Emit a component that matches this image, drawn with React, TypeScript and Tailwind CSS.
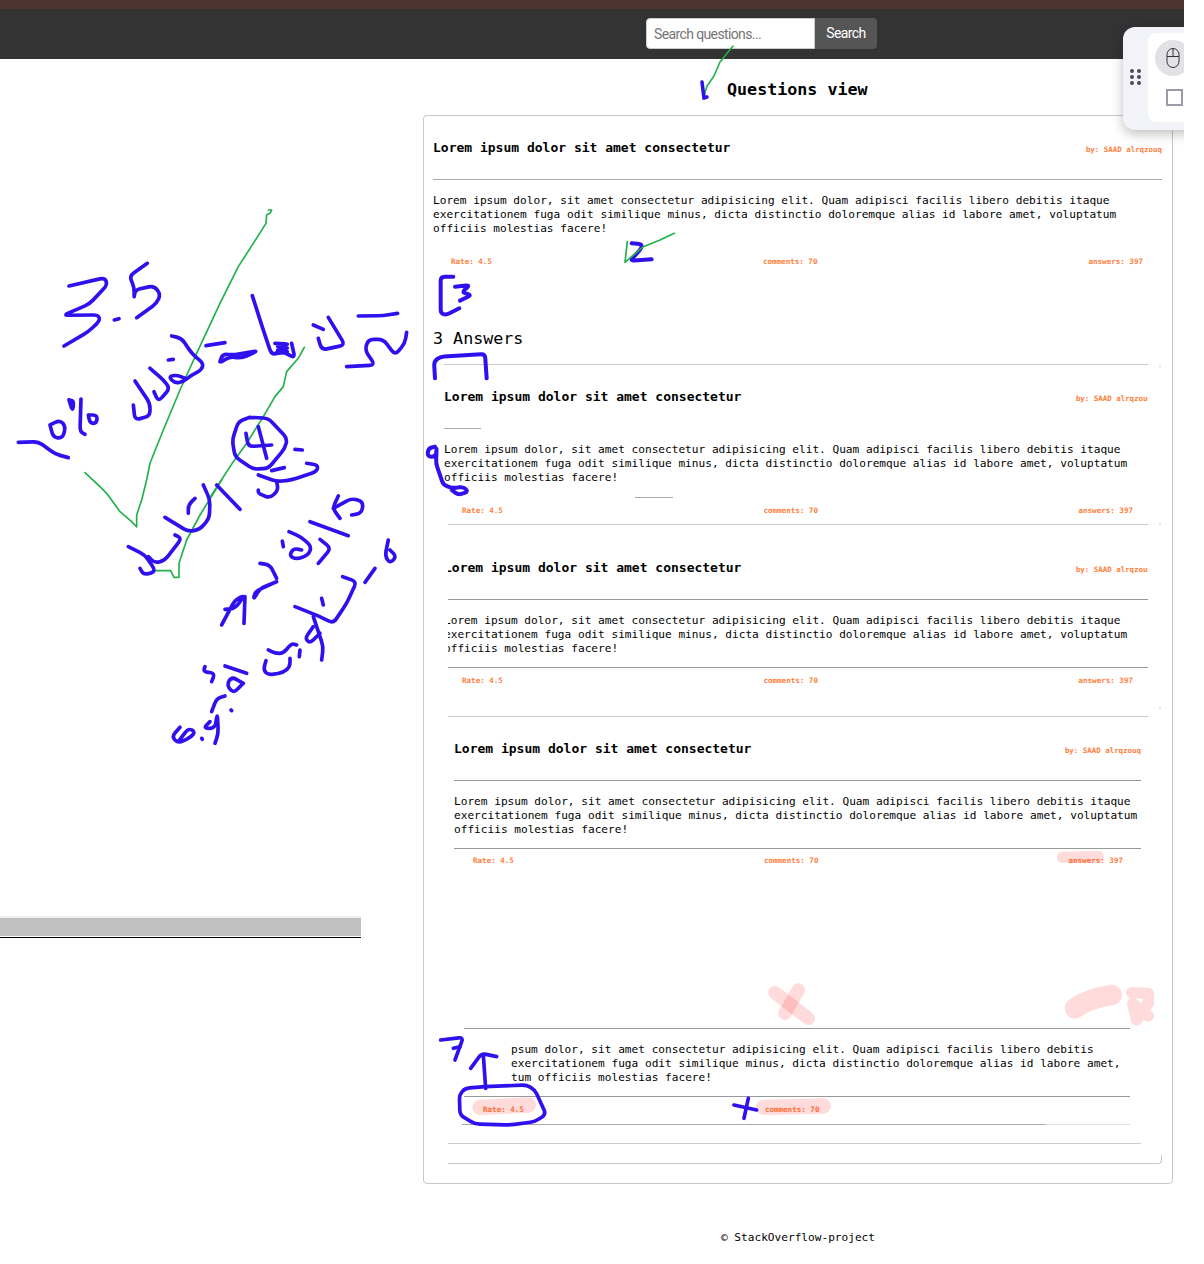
import React from "react";

const BODY = (
  <>
    Lorem ipsum dolor, sit amet consectetur adipisicing elit. Quam adipisci facilis libero debitis itaque
    <br />
    exercitationem fuga odit similique minus, dicta distinctio doloremque alias id labore amet, voluptatum
    <br />
    officiis molestias facere!
  </>
);

function Title() {
  return <h3 className="text-[13px] leading-[18px] font-bold text-black whitespace-nowrap">Lorem ipsum dolor sit amet consectetur</h3>;
}
function Author() {
  return <span className="mt-[4px] text-[7.45px] leading-[10px] font-bold text-[#ff7d3a] whitespace-nowrap">by: SAAD alrqzouq</span>;
}
function Text() {
  return <p className="text-[11.13px] leading-[14px] text-black whitespace-nowrap">{BODY}</p>;
}
function Meta({ children }: { children: React.ReactNode }) {
  return <span className="text-[7.55px] leading-[13px] font-bold text-[#ff7d3a] whitespace-nowrap">{children}</span>;
}
function FootRow() {
  return (
    <>
      <Meta>Rate: 4.5</Meta>
      <Meta>comments: 70</Meta>
      <Meta>answers: 397</Meta>
    </>
  );
}

// Rounds the corners of a hand-drawn polyline so that it reads as a pen stroke.
function smooth(d: string, r = 16): string {
  const subs = d.split("M").filter(Boolean);
  return subs
    .map((s) => {
      const closed = s.trim().endsWith("Z");
      const pts = s
        .replace("Z", "")
        .split("L")
        .map((p) => p.trim().split(/\s+/).map(Number));
      if (closed) pts.push(pts[0]);
      let out = `M${pts[0][0]} ${pts[0][1]}`;
      for (let i = 1; i < pts.length - 1; i++) {
        const [ax, ay] = pts[i - 1];
        const [bx, by] = pts[i];
        const [cx, cy] = pts[i + 1];
        const l1 = Math.hypot(bx - ax, by - ay) || 1;
        const l2 = Math.hypot(cx - bx, cy - by) || 1;
        const t1 = Math.min(r, l1 / 2) / l1;
        const t2 = Math.min(r, l2 / 2) / l2;
        out += `L${bx - (bx - ax) * t1} ${by - (by - ay) * t1}Q${bx} ${by} ${bx + (cx - bx) * t2} ${by + (cy - by) * t2}`;
      }
      const last = pts[pts.length - 1];
      out += `L${last[0]} ${last[1]}`;
      return out;
    })
    .join("");
}

const blue1 = [
  "M207 258L315 233L322 255L268 312L190 346L295 345L300 362L265 395L192 438",
  "M343 360L357 356",
  "M442 190L388 228L403 262L402 297L405 270L462 257L482 283L470 310L410 353",
  "M55 727L115 725L165 762L205 773",
  "M150 675L180 660L197 680L188 715L160 712Z",
  "M207 600L222 603L218 635Z",
  "M243 597L240 695L255 703",
  "M265 645L292 645L290 670L270 670Z",
  "M405 543L450 610L450 648L405 660L400 615",
  "M450 505L490 540L510 565L475 605L462 575",
  "M515 408L545 415L575 460L610 490L605 510L575 525L550 545L525 550L505 530L530 525L555 535",
  "M505 480L520 478",
  "M618 437L675 428",
  "M660 485L668 462L700 465L775 452L725 475L690 470L665 485",
  "M757 287L785 375L815 465L850 455L885 475L875 430",
  "M825 430L870 432L825 440L870 444L825 450L870 455L830 458",
  "M985 352L1035 435L965 450L955 415",
  "M940 375L970 388",
  "M1075 348L1150 347L1193 340",
  "M1040 500L1125 495L1095 450L1105 418L1150 418L1185 465L1215 430L1220 397",
  "M750 652L805 655L862 715L855 745L805 805L760 808L705 770L697 720L715 665Z",
  "M738 700L745 740L815 735",
  "M775 680L800 775",
  "M885 748L907 750",
  "M815 812L853 803",
  "M775 825L830 845L875 840L950 815L955 795L920 790",
  "M830 845L835 870L810 895L775 880L775 870",
];

const blue3 = [
  "M25 200L75 225L105 270L95 280L70 283L60 265",
  "M85 230L105 250L135 240L185 175L165 165",
  "M135 112L205 155L240 148L268 115L270 60L250 15",
  "M290 15L360 88",
  "M205 100L205 75L225 55",
  "M655 48L638 85L660 115",
  "M640 85L695 55L730 65L725 100L695 105",
  "M570 125L685 167",
  "M507 155L545 172L575 200L565 225L530 238L508 228L520 205L545 210",
  "M600 178L633 205L595 250",
  "M487 183L490 200",
  "M420 250L450 255L470 295",
  "M468 306L420 325L400 360L405 335L470 305",
  "M315 388L345 385L375 345L345 360L305 435",
  "M375 350L372 430",
  "M805 180L795 228L810 250L830 230L810 210",
  "M765 265L735 307",
  "M668 290L710 305L680 370L640 430L600 410L525 380",
  "M605 355L610 375",
  "M580 410L610 500L605 540",
  "M580 440L555 475L570 490L600 460",
  "M445 510L465 520L490 520L515 490L530 495",
  "M438 542L430 570L445 585L490 578L510 560L510 535",
  "M540 510L538 530",
  "M255 560L250 575L285 580L275 605",
  "M315 558L380 580",
  "M370 610L340 640L320 615L335 590Z",
  "M315 648L290 655L275 695",
  "M270 725L250 745L285 745L292 700L295 760L285 790",
  "M180 742L155 770L175 790L215 770L225 755L205 745L175 785",
  "M245 775L247 778",
  "M333 690L335 692",
];

const blue4 = [
  "M635 40L665 42L665 55L630 92L695 88",
  "M100 140L62 140L62 250L78 255L118 235",
  "M105 170L150 165L125 187L155 195L120 212",
  "M45 445L42 395L60 380L195 372L200 445",
  "M45 650L25 655L22 680L48 680L50 650L48 700L70 765L100 775L130 770L145 785L115 795L95 780",
];

const blue5 = [
  "M62 180L130 172L105 240",
  "M100 205L120 200",
  "M197 325L190 225",
  "M152 265L185 220L230 230",
  "M195 320L135 325L118 345L120 405L165 432L270 435L345 425L378 403L345 330L320 315Z",
  "M985 355L972 415",
  "M942 375L1010 390",
];

function Annotations() {
  return (
    <svg className="absolute left-0 top-0 pointer-events-none" width={1184} height={1264} fill="none" strokeLinecap="round" strokeLinejoin="round">
      {/* pink highlights */}
      <g stroke="#ff0000" strokeOpacity={0.14}>
        <g transform="translate(420,980) scale(0.3333)">
          <path d="M180 382L325 375" strokeWidth={46} />
          <path d="M1030 382L1210 378" strokeWidth={46} />
          <path d="M1065 38L1165 115" strokeWidth={40} />
          <path d="M1135 30L1095 100" strokeWidth={40} />
        </g>
        <g transform="translate(1000,840) scale(0.3333)">
          <path d="M187 52L295 50" strokeWidth={34} />
          <path d="M225 505Q265 475 335 465" strokeWidth={62} />
          <path d="M395 458L445 460L445 490L410 540L398 490L445 528" strokeWidth={34} />
        </g>
      </g>
      {/* green */}
      <g stroke="#22b14c" fill="none">
        <path d="M733 46L720 62L714 76L707 86L703 99L702 81" strokeWidth={1.6} />
        <g transform="translate(0,200) scale(0.3333)" strokeWidth={5}>
          <path d="M805 30L815 30L810 40L800 45L798 70L760 130L715 200L660 310L590 460L540 570L490 690L450 790L440 840L425 900L410 945L410 981L395 965L360 935L320 880L300 860L255 818" />
          <path d="M913 442L895 475L860 515L850 560L825 590L790 650L740 730L700 785L625 900" />
        </g>
        <g transform="translate(120,480) scale(0.3333)" strokeWidth={5}>
          <path d="M305 0L240 105L200 180L177 250L177 292L162 292L152 272L105 272" />
        </g>
      </g>
      {/* blue */}
      <g stroke="#2f10ee">
        <path d="M702 82L704 98L707 97" strokeWidth={3.5} />
        <g transform="translate(0,200) scale(0.3333)" strokeWidth={11}>
          {blue1.map((d, i) => <path key={i} d={smooth(d)} />)}
        </g>
        <g transform="translate(120,480) scale(0.3333)" strokeWidth={11}>
          {blue3.map((d, i) => <path key={i} d={smooth(d)} />)}
        </g>
        <g transform="translate(420,230) scale(0.3333)" strokeWidth={12}>
          {blue4.map((d, i) => <path key={i} d={smooth(d, 12)} />)}
        </g>
        <g transform="translate(420,980) scale(0.3333)" strokeWidth={11}>
          {blue5.map((d, i) => <path key={i} d={smooth(d, 14)} />)}
        </g>
      </g>
      <g transform="translate(420,230) scale(0.3333)" stroke="#22b14c" strokeWidth={5}>
        <path d="M763 10L720 30L670 50L615 97L622 35" />
      </g>
      <path d="M1160 365V367M1160 523V525M1160 707V709" stroke="#e3e3e3" strokeWidth={1.5} />
    </svg>
  );
}

function Toolbar() {
  return (
    <div className="absolute left-[1123px] top-[27px] w-[90px] h-[103px] flex rounded-l-[12px] bg-[#f1f3f8] shadow-[0_4px_12px_rgba(0,0,0,0.25)] pt-[6px] pb-[8px]">
      <div className="w-[25px] h-[87px] flex items-center justify-center">
        <div className="grid grid-cols-2 gap-x-[3px] gap-y-[2px]">
          {[0, 1, 2, 3, 4, 5].map((i) => (
            <span key={i} className="block w-[4px] h-[4px] rounded-full bg-[#4b4b55]" />
          ))}
        </div>
      </div>
      <div className="flex-1 bg-white rounded-l-[8px] pl-[7px] pt-[7px] flex flex-col">
        <div className="w-[36px] h-[36px] rounded-full bg-[#e1e1e6] flex items-center justify-center">
          <svg width="14" height="20" viewBox="0 0 14 20" fill="none" stroke="#33333b" strokeWidth="1">
            <rect x="1" y="0.5" width="12" height="19" rx="6" />
            <path d="M7 0.5V8.5M1 8.5H13" />
          </svg>
        </div>
        <div className="ml-[11px] mt-[13px] w-[17px] h-[17px] border-2 border-[#9d9aa9] bg-white" />
      </div>
    </div>
  );
}

export default function App() {
  return (
    <div className="relative w-[1184px] h-[1264px] overflow-hidden bg-white font-['DejaVu_Sans_Mono',monospace]">
      <div className="h-[9px] bg-[#4e342e]" />
      <header className="h-[50px] bg-[#333333] flex pl-[646px] pt-[9px] font-['Roboto',sans-serif] text-[14px]">
        <input
          placeholder="Search questions..."
          className="w-[169px] h-[31px] bg-white border border-[#cccccc] rounded-l-[4px] px-[7px] text-[14px] tracking-[-0.62px] placeholder:text-[#757575] outline-none"
        />
        <button className="w-[62px] h-[31px] bg-[#555555] text-white rounded-r-[4px] text-[14px] tracking-[-0.6px]">Search</button>
      </header>

      <div className="flex">
        <aside className="w-[361px] pt-[857px]">
          <div className="h-[21px] bg-[#c0c0c0] border-t-2 border-[#eeeeee] border-b-[1px] border-b-white shadow-[0_1px_0_#000000]" />
        </aside>

        <main className="ml-[62px] w-[750px]">
          <div className="h-[56px] pt-[20px] pl-[304px]">
            <h2 className="text-[16.7px] leading-[20px] font-bold text-black">Questions view</h2>
          </div>

          <section className="h-[1069px] border border-[#c8c8c8] rounded-[4px] pl-[9px] overflow-hidden">
            {/* question */}
            <div className="w-[729px]">
              <div className="h-[63px] flex items-center justify-between">
                <Title />
                <Author />
              </div>
              <hr className="h-px border-0 bg-[#aaaaaa]" />
              <div className="mt-[14px]"><Text /></div>
              <div className="mt-[19px] ml-[18px] w-[692px] flex justify-between h-[13px]"><FootRow /></div>
            </div>

            <h2 className="mt-[58px] text-[16.7px] leading-[24px] text-black">3 Answers</h2>
            <hr className="mt-[14px] ml-[11px] w-[704px] h-px border-0 bg-[#cccccc]" />

            {/* answer 1 */}
            <div className="ml-[11px] w-[704px]">
              <div className="h-[63px] flex items-center justify-between overflow-hidden">
                <Title />
                <span className="-mr-[4px] flex"><Author /></span>
              </div>
              <hr className="w-[37px] h-px border-0 bg-[#aaaaaa]" />
              <div className="mt-[14px]"><Text /></div>
              <hr className="mt-[12px] ml-[191px] w-[38px] h-px border-0 bg-[#aaaaaa]" />
              <div className="mt-[6px] ml-[18px] w-[671px] flex justify-between h-[13px]"><FootRow /></div>
            </div>
            <hr className="mt-[7px] ml-[15px] w-[700px] h-px border-0 bg-[#cccccc]" />

            {/* answer 2, left edge clipped */}
            <div className="ml-[15px] w-[700px] overflow-hidden">
              <div className="-ml-[4px] w-[704px] mt-[11px] h-[63px] flex items-center justify-between">
                <Title />
                <span className="-mr-[4px] flex"><Author /></span>
              </div>
              <hr className="h-px border-0 bg-[#999999]" />
              <div className="mt-[14px] -ml-[4px]"><Text /></div>
              <hr className="mt-[11px] h-px border-0 bg-[#999999]" />
              <div className="mt-[6px] ml-[14px] w-[671px] flex justify-between h-[13px]"><FootRow /></div>
            </div>
            <hr className="mt-[29px] ml-[15px] w-[700px] h-px border-0 bg-[#cccccc]" />

            {/* answer 3 */}
            <div className="ml-[21px] w-[687px]">
              <div className="h-[63px] flex items-center justify-between">
                <Title />
                <Author />
              </div>
              <hr className="h-px border-0 bg-[#999999]" />
              <div className="mt-[14px]"><Text /></div>
              <hr className="mt-[11px] h-px border-0 bg-[#999999]" />
              <div className="mt-[5px] ml-[19px] w-[650px] flex justify-between h-[13px]"><FootRow /></div>
            </div>

            {/* answer 4, partly erased */}
            <div className="ml-[31px] w-[666px] mt-[161px]">
              <hr className="h-px border-0 bg-[#999999]" />
              <p className="mt-[14px] ml-[47px] text-[11.13px] leading-[14px] text-black whitespace-nowrap">
                psum dolor, sit amet consectetur adipisicing elit. Quam adipisci facilis libero debitis
                <br />
                exercitationem fuga odit similique minus, dicta distinctio doloremque alias id labore amet,
                <br />
                tum officiis molestias facere!
              </p>
              <hr className="mt-[11px] h-px border-0 bg-[#999999]" />
              <div className="mt-[6px] ml-[19px] flex gap-[241px] h-[13px]">
                <Meta>Rate: 4.5</Meta>
                <Meta>comments: 70</Meta>
              </div>
              <div className="mt-[8px] -ml-[2px] w-[668px] flex h-px">
                <div className="w-[583px] bg-[#aaaaaa]" />
                <div className="flex-1 bg-[#dddddd]" />
              </div>
            </div>
            <hr className="mt-[18px] ml-[15px] w-[693px] h-px border-0 bg-[#cccccc]" />
            <div className="mt-[11px] ml-[15px] w-[714px] h-[9px] border-b border-r border-[#c8c8c8] rounded-br-[4px]" />
          </section>

          <p className="mt-[47px] text-center text-[11.13px] leading-[14px] text-black">© StackOverflow-project</p>
        </main>
      </div>

      <Toolbar />
      <Annotations />
    </div>
  );
}
